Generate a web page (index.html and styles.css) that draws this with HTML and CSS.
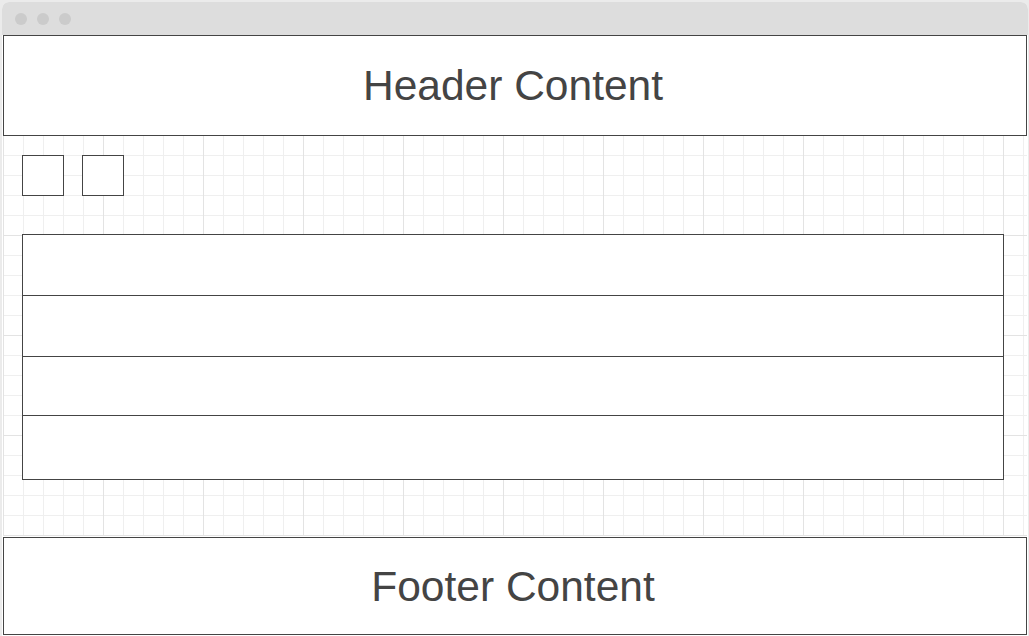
FILE: index.html
```html
<!DOCTYPE html>
<html lang="en">
<head>
<meta charset="utf-8">
<title>Wireframe</title>
<link rel="stylesheet" href="styles.css">
</head>
<body>
<div class="window">
  <div class="titlebar">
    <span class="dot"></span>
    <span class="dot"></span>
    <span class="dot"></span>
  </div>
  <header class="header">Header Content</header>
  <main class="canvas">
    <div class="toolbar">
      <div class="square"></div>
      <div class="square"></div>
    </div>
    <div class="list">
      <div class="row row-1"></div>
      <div class="row row-2"></div>
      <div class="row row-3"></div>
      <div class="row row-4"></div>
    </div>
  </main>
  <footer class="footer">Footer Content</footer>
</div>
</body>
</html>
```

FILE: styles.css
```css
* { box-sizing: border-box; }

html, body {
  margin: 0;
  height: 100%;
}

body {
  background: #ebebeb;
  padding: 2px 1px 0 2px;
  font-family: "Liberation Sans", Arial, sans-serif;
  overflow: hidden;
}

.window {
  background: #ffffff;
  border-radius: 7px 7px 0 0;
  height: 634px;
  display: flex;
  flex-direction: column;
  overflow: hidden;
}

.titlebar {
  height: 33px;
  background: #dddddd;
  display: flex;
  align-items: center;
  gap: 10px;
  padding-left: 13px;
  flex: none;
}

.dot {
  width: 12px;
  height: 12px;
  border-radius: 50%;
  background: #cbcbcb;
}

.header,
.footer {
  margin: 0 1px;
  border: 1px solid #444444;
  display: flex;
  align-items: center;
  justify-content: center;
  color: #444444;
  font-size: 42.5px;
  padding-right: 4px;
  flex: none;
}

.header {
  height: 101px;
}

.footer {
  height: 98px;
  margin-top: 1px;
  padding-top: 2px;
}

.canvas {
  margin: 0 1px;
  height: 400px;
  flex: none;
  padding: 19px 23px 0 19px;
  display: flex;
  flex-direction: column;
  gap: 38px;
  background-color: #ffffff;
  background-image:
    linear-gradient(to right, #e3e3e3 1px, transparent 1px),
    linear-gradient(to bottom, #e3e3e3 1px, transparent 1px),
    linear-gradient(to right, #efefef 1px, transparent 1px),
    linear-gradient(to bottom, #efefef 1px, transparent 1px);
  background-size: 100px 100px, 100px 100px, 20px 20px, 20px 20px;
  background-position: 0 0, 0 99px, 0 0, 0 19px;
}

.toolbar {
  display: flex;
  gap: 18px;
}

.square {
  width: 42px;
  height: 41px;
  border: 1px solid #444444;
  background: #ffffff;
}

.list {
  border: 1px solid #444444;
  background: #ffffff;
  display: flex;
  flex-direction: column;
}

.row + .row {
  border-top: 1px solid #444444;
}

.row-1 { height: 60px; }
.row-2 { height: 61px; }
.row-3 { height: 59px; }
.row-4 { height: 64px; }
```
